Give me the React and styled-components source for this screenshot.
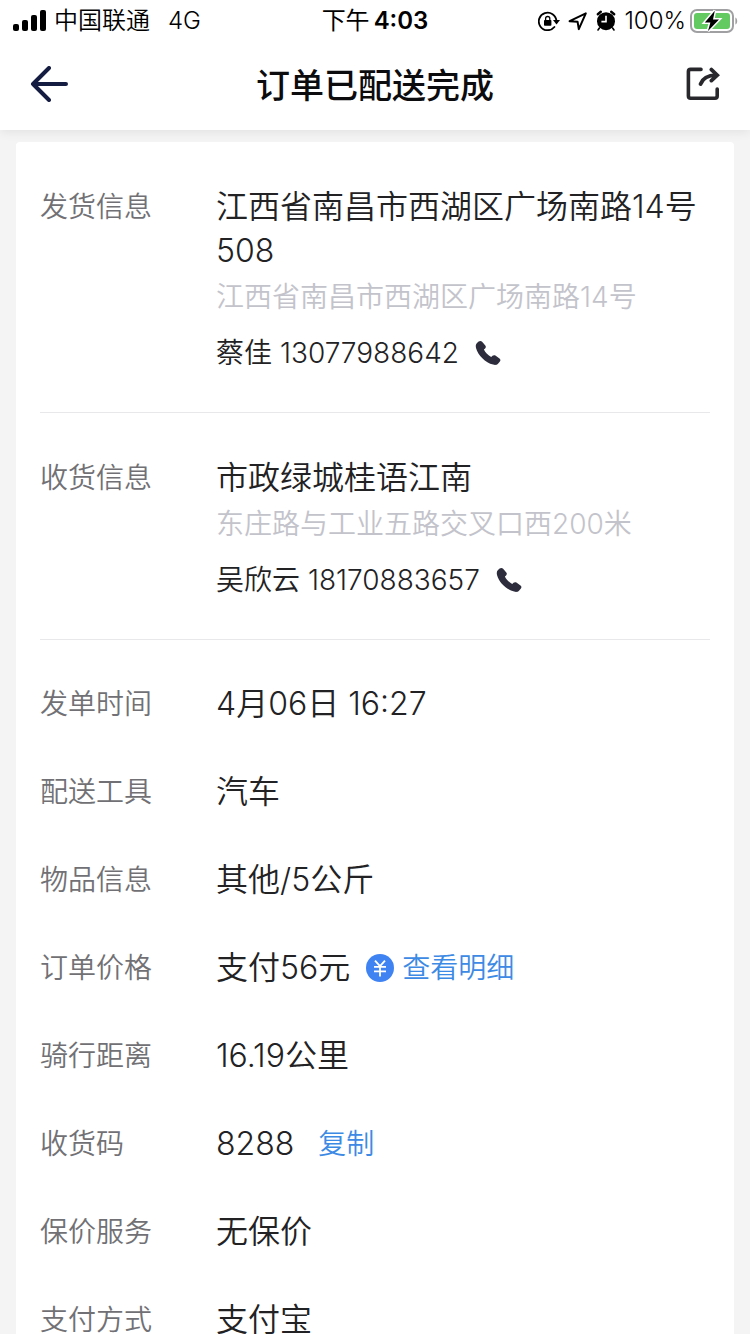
import React from 'react'
import styled, { createGlobalStyle, css } from 'styled-components'

const colors = {
  background: '#f4f4f5',
  border: '#e8e8ea',
  heading: '#0c0c0e',
  icon: '#2c2c3c',
  label: '#717175',
  link: '#3d8ae5',
  muted: '#c3c3cb',
  text: '#222224',
}

const GlobalStyle = createGlobalStyle`
  * {
    box-sizing: border-box;
  }

  body {
    margin: 0;
    background: ${colors.background};
    color: ${colors.text};
    font-family: Inter, 'Noto Sans CJK SC', sans-serif;
    font-size: 28px;
    font-weight: 350;
  }
`

const resetButton = css`
  display: flex;
  align-items: center;
  padding: 0;
  border: 0;
  background: none;
  font: inherit;
  cursor: pointer;
`

const StyledTop = styled.div`
  background: #fff;
  box-shadow: 0 2px 10px rgba(0, 0, 0, 0.08);
`

const StyledStatusBar = styled.div`
  display: grid;
  grid-template-columns: 1fr auto 1fr;
  align-items: center;
  height: 40px;
  padding: 0 12px;
  color: #000;
  font-size: 24px;
  line-height: 42px;
`

const StyledCarrier = styled.div`
  display: flex;
  align-items: center;
  gap: 8px;
`

const StyledNetwork = styled.span`
  margin-left: 10px;
`

const StyledClock = styled.time`
  font-weight: 600;
`

const StyledDaytime = styled.span`
  margin-right: 4px;
  font-weight: 400;
`

const StyledIndicators = styled.div`
  display: flex;
  align-items: center;
  justify-content: flex-end;
  gap: 8px;
`

const StyledPower = styled.div`
  display: flex;
  align-items: center;
  gap: 4px;
`

const StyledHeader = styled.header`
  display: grid;
  grid-template-columns: 1fr auto 1fr;
  align-items: center;
  height: 90px;
  padding: 0 30px 2px;
`

const StyledHeaderButton = styled.button`
  ${resetButton}
  justify-self: ${({ $align }) => $align};
`

const StyledTitle = styled.h1`
  margin: 0;
  padding-top: 4px;
  color: ${colors.heading};
  font-size: 34px;
  font-weight: 500;
  line-height: 48px;
`

const StyledCard = styled.main`
  margin: 12px 16px 0;
  padding: 0 24px;
  border-radius: 4px;
  background: #fff;
`

const StyledSection = styled.section`
  display: flex;
  padding: 43px 0 39px;
  border-bottom: 1px solid ${colors.border};
`

const StyledDetails = styled.dl`
  margin: 0;
  padding: 20px 0;
`

const StyledRow = styled.div`
  display: flex;
  align-items: center;
  height: 88px;
`

const StyledLabel = styled.dt`
  flex: 0 0 176px;
  color: ${colors.label};
  line-height: 44px;
`

const StyledSectionLabel = styled(StyledLabel).attrs({ as: 'h2' })`
  margin: 0;
  font-size: 28px;
  font-weight: 350;
`

const StyledValue = styled.dd`
  display: flex;
  align-items: center;
  margin: 0;
  font-size: 32px;
  line-height: 44px;
`

const StyledInfo = styled.div`
  flex: 1;
  min-width: 0;
`

const StyledAddress = styled.p`
  margin: 0;
  font-size: 32px;
  line-height: 44px;
`

const StyledArea = styled.p`
  margin: 4px 0 16px;
  color: ${colors.muted};
  line-height: 40px;
`

const StyledContact = styled.div`
  display: flex;
  align-items: center;
  gap: 16px;
  line-height: 40px;
`

const StyledCall = styled.a`
  display: flex;
  color: ${colors.icon};
`

const StyledLink = styled.button`
  ${resetButton}
  gap: 8px;
  margin-left: ${({ $gap }) => $gap}px;
  color: ${colors.link};
  font-size: 28px;
`

const SignalIcon = () => (
  <svg width="34" height="22" viewBox="0 0 34 22">
    <rect x="1" y="14" width="6" height="7" rx="2" />
    <rect x="10" y="10" width="6" height="11" rx="2" />
    <rect x="19" y="5" width="6" height="16" rx="2" />
    <rect x="28" y="0" width="6" height="21" rx="2" />
  </svg>
)

const RotationLockIcon = () => (
  <svg width="22" height="20" viewBox="0 0 22 20" fill="none">
    <path
      d="M16.4 16A8.8 8.8 0 1 1 18.4 10"
      stroke="#000"
      strokeWidth="1.8"
      strokeLinecap="round"
    />
    <path d="M15 9H22L18.5 13.6Z" fill="#000" />
    <rect x="6" y="9" width="7.4" height="5.8" rx="0.8" fill="#000" />
    <path d="M7.6 9.5V7.6a2.1 2.1 0 0 1 4.2 0v1.9" stroke="#000" strokeWidth="1.3" />
  </svg>
)

const LocationIcon = () => (
  <svg width="20" height="20" viewBox="0 0 20 20" fill="none">
    <path
      d="M1.6 10.2 17.8 2.4 10.8 18.2 9.6 10.8Z"
      stroke="#000"
      strokeWidth="2"
      strokeLinejoin="round"
    />
  </svg>
)

const AlarmIcon = () => (
  <svg width="20" height="22" viewBox="0 0 20 22" fill="none">
    <circle cx="10" cy="11.2" r="9" fill="#000" />
    <path
      d="M1.8 4.2 4.8 1.8M18.2 4.2 15.2 1.8"
      stroke="#000"
      strokeWidth="2.4"
      strokeLinecap="round"
    />
    <path
      d="M3.4 18 2 20M16.6 18 18 20"
      stroke="#000"
      strokeWidth="1.6"
      strokeLinecap="round"
    />
    <path d="M10 5.8V11.6H5.4" stroke="#fff" strokeWidth="1.6" />
  </svg>
)

const BatteryIcon = () => (
  <svg width="48" height="24" viewBox="0 0 48 24" fill="none">
    <rect x="1" y="1" width="42" height="22" rx="6" stroke="#a0a0a2" strokeWidth="2" />
    <rect x="4" y="4" width="36" height="16" rx="3" fill="#63ca62" />
    <path d="M45.4 8.4c2.4 1.2 2.4 6 0 7.2Z" fill="#a0a0a2" />
    <path
      d="M24.8 1.8 14.8 13.4H20.4L18 22 29 10.4H23Z"
      fill="#000"
      stroke="#fff"
      strokeWidth="3"
      paintOrder="stroke"
    />
  </svg>
)

const BackIcon = () => (
  <svg width="39" height="36" viewBox="0 0 39 36" fill="none">
    <path
      d="M19 2 3 18 19 34M3 18H36"
      stroke="#141c42"
      strokeWidth="4"
      strokeLinecap="round"
      strokeLinejoin="round"
    />
  </svg>
)

const ShareIcon = () => (
  <svg width="34" height="34" viewBox="0 0 34 34" fill="none">
    <path
      d="M15 2.4H4.6Q2.4 2.4 2.4 4.6V29Q2.4 31.2 4.6 31.2H29Q31.2 31.2 31.2 29V22"
      stroke="#28282c"
      strokeWidth="3.6"
      strokeLinecap="round"
    />
    <path
      d="M14.6 17C16.6 11.6 21.4 8.4 30 8.2M25.4 2.6 31.2 8.2 25.4 13.6"
      stroke="#28282c"
      strokeWidth="3.8"
      strokeLinecap="round"
    />
  </svg>
)

const PhoneIcon = () => (
  <svg width="26" height="26" viewBox="0 0 26 26" fill="currentColor">
    <path d="M3.6 1.6C4.7.7 6.2.7 7.1 1.7L10.3 5.4C11.1 6.4 11 7.6 10.1 8.4L8.9 9.5C10.2 12.4 13.2 15.5 16.2 17L17.5 15.8C18.3 15 19.4 14.9 20.4 15.6L24.5 18.4C25.6 19.2 25.7 20.5 24.9 21.5L23 23.7C22 24.9 20.2 25.2 18.1 24.6C10.3 22.6 3 15.3 1 7.9C.5 5.8.8 4.2 2 3.1Z" />
  </svg>
)

const YuanIcon = () => (
  <svg width="28" height="28" viewBox="0 0 28 28" fill="none">
    <circle cx="14" cy="14" r="14" fill="#3f83f3" />
    <path
      d="M9 6.6 14 12.2 19 6.6M8 12.8H20M8 17.4H20M14 12.2V22.4"
      stroke="#fff"
      strokeWidth="1.8"
    />
  </svg>
)

const parties = [
  {
    label: '发货信息',
    address: '江西省南昌市西湖区广场南路14号508',
    area: '江西省南昌市西湖区广场南路14号',
    name: '蔡佳',
    phone: '13077988642',
  },
  {
    label: '收货信息',
    address: '市政绿城桂语江南',
    area: '东庄路与工业五路交叉口西200米',
    name: '吴欣云',
    phone: '18170883657',
  },
]

const details = [
  { label: '发单时间', value: '4月06日 16:27' },
  { label: '配送工具', value: '汽车' },
  { label: '物品信息', value: '其他/5公斤' },
  {
    label: '订单价格',
    value: '支付56元',
    action: (
      <StyledLink type="button" $gap={16}>
        <YuanIcon />
        查看明细
      </StyledLink>
    ),
  },
  { label: '骑行距离', value: '16.19公里' },
  {
    label: '收货码',
    value: '8288',
    action: (
      <StyledLink type="button" $gap={24}>
        复制
      </StyledLink>
    ),
  },
  { label: '保价服务', value: '无保价' },
  { label: '支付方式', value: '支付宝' },
]

const StatusBar = () => (
  <StyledStatusBar>
    <StyledCarrier>
      <SignalIcon />
      <span>中国联通</span>
      <StyledNetwork>4G</StyledNetwork>
    </StyledCarrier>
    <StyledClock>
      <StyledDaytime>下午</StyledDaytime>
      4:03
    </StyledClock>
    <StyledIndicators>
      <RotationLockIcon />
      <LocationIcon />
      <AlarmIcon />
      <StyledPower>
        <span>100%</span>
        <BatteryIcon />
      </StyledPower>
    </StyledIndicators>
  </StyledStatusBar>
)

const Party = ({ address, area, label, name, phone }) => (
  <StyledSection>
    <StyledSectionLabel>{label}</StyledSectionLabel>
    <StyledInfo>
      <StyledAddress>{address}</StyledAddress>
      <StyledArea>{area}</StyledArea>
      <StyledContact>
        <span>
          {name} {phone}
        </span>
        <StyledCall href={`tel:${phone}`} aria-label={phone}>
          <PhoneIcon />
        </StyledCall>
      </StyledContact>
    </StyledInfo>
  </StyledSection>
)

const App = () => (
  <>
    <GlobalStyle />
    <StyledTop>
      <StatusBar />
      <StyledHeader>
        <StyledHeaderButton type="button" aria-label="返回" $align="start">
          <BackIcon />
        </StyledHeaderButton>
        <StyledTitle>订单已配送完成</StyledTitle>
        <StyledHeaderButton type="button" aria-label="分享" $align="end">
          <ShareIcon />
        </StyledHeaderButton>
      </StyledHeader>
    </StyledTop>
    <StyledCard>
      {parties.map(party => (
        <Party key={party.label} {...party} />
      ))}
      <StyledDetails>
        {details.map(({ action, label, value }) => (
          <StyledRow key={label}>
            <StyledLabel>{label}</StyledLabel>
            <StyledValue>
              {value}
              {action}
            </StyledValue>
          </StyledRow>
        ))}
      </StyledDetails>
    </StyledCard>
  </>
)

export default App
